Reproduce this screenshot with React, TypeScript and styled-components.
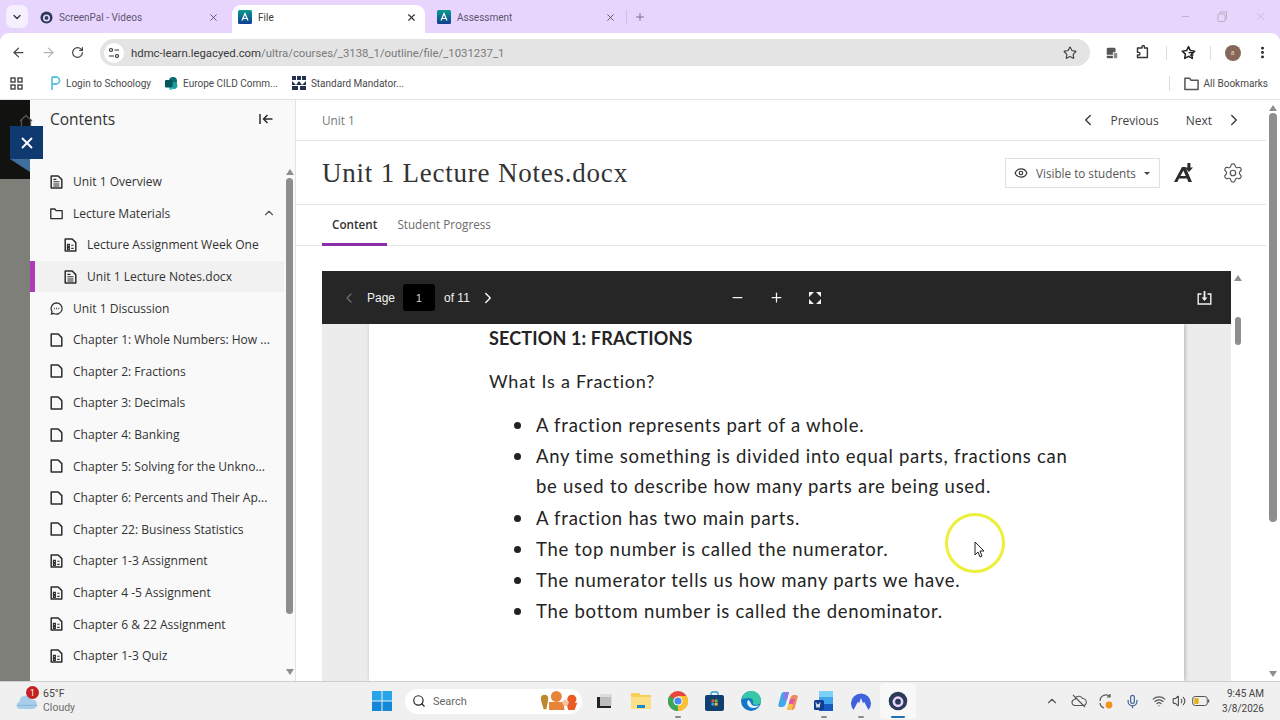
import React from "react";
import styled, { createGlobalStyle } from "styled-components";
import {
  ArrowLeft,
  ArrowRight,
  ChevronDown,
  ChevronLeft,
  ChevronRight,
  ChevronUp,
  Eye,
  Mic,
  Minus,
  MoreVertical,
  Plus,
  RotateCw,
  Search,
  Settings,
  Star,
  Volume2,
  Wifi,
  X,
} from "lucide-react";

const GlobalStyle = createGlobalStyle`
  html, body {
    margin: 0;
    padding: 0;
    overflow: hidden;
    background: #fff;
  }
  * {
    box-sizing: border-box;
  }
`;

const Screen = styled.div`
  position: relative;
  width: 1280px;
  height: 720px;
  display: flex;
  flex-direction: column;
  overflow: hidden;
  font-family: "Open Sans", sans-serif;
  color: #333;
`;

/* browser chrome */
const TabStrip = styled.div`
  height: 33px;
  flex: none;
  display: flex;
  align-items: flex-end;
  background: #e8d5fd;
  padding-left: 6px;
  font-family: "Roboto", sans-serif;
`;

const TabMenu = styled.div`
  width: 22px;
  height: 23px;
  margin: 0 4px 5px 0;
  border-radius: 7px;
  background: #f6effe;
  display: flex;
  align-items: center;
  justify-content: center;
  color: #333;
`;

const Tab = styled.div<{ $active?: boolean; $width: number; $left: number }>`
  width: ${(p) => p.$width}px;
  height: 28px;
  display: flex;
  align-items: center;
  padding: 0 ${(p) => (p.$active ? 8 : 13)}px 4px ${(p) => p.$left}px;
  border-radius: 9px 9px 0 0;
  background: ${(p) => (p.$active ? "#fff" : "transparent")};
  color: ${(p) => (p.$active ? "#3a3a3a" : "#5c5670")};
  font-size: 10px;
`;

const TabTitle = styled.span`
  flex: 1;
  margin-left: 6px;
`;

const TabDivider = styled.span`
  width: 1px;
  height: 14px;
  margin: 0 0 9px -3px;
  background: #cfc0e2;
`;

const NewTab = styled.div`
  display: flex;
  align-items: center;
  height: 28px;
  padding: 0 0 4px 7px;
  color: #7b7690;
`;

const WindowButtons = styled.div`
  margin-left: auto;
  height: 33px;
  display: flex;
  align-items: center;
  gap: 26px;
  padding-right: 13px;
  color: #b9b0c6;
`;

const ChromeBack = styled.div`
  flex: none;
  background: #e8d5fd;
`;

const Toolbar = styled.div`
  height: 33px;
  display: flex;
  align-items: center;
  background: #fff;
  border-radius: 9px 9px 0 0;
  padding: 6px 0 0 11px;
  color: #444;
`;

const NavButton = styled.span<{ $faint?: boolean }>`
  width: 30px;
  display: flex;
  color: ${(p) => (p.$faint ? "#b5b5b5" : "#444")};
`;

const UrlBar = styled.div`
  width: 990px;
  height: 27px;
  margin-left: -1px;
  display: flex;
  align-items: center;
  border-radius: 14px;
  background: #e4e4e4;
  padding: 0 13px 0 4px;
  font-family: "Roboto", sans-serif;
  font-size: 11.35px;
  color: #7a7a7a;
`;

const SiteBadge = styled.span`
  width: 20px;
  height: 20px;
  border-radius: 50%;
  background: #fff;
  display: flex;
  align-items: center;
  justify-content: center;
  margin-right: 7px;
`;

const UrlHost = styled.span`
  color: #3a3a3a;
`;

const UrlTail = styled.span`
  flex: 1;
`;

const ToolIcons = styled.div`
  flex: 1;
  display: flex;
  align-items: center;
  padding-left: 15px;
`;

const ToolSlot = styled.span<{ $width: number }>`
  width: ${(p) => p.$width}px;
  display: flex;
  align-items: center;
  justify-content: center;
`;

const ToolDivider = styled.span`
  width: 1px;
  height: 14px;
  background: #ddd;
`;

const Avatar = styled.span`
  width: 16px;
  height: 16px;
  border-radius: 50%;
  background: #86685a;
  color: #f0d8cc;
  font-size: 7px;
  display: flex;
  align-items: center;
  justify-content: center;
`;

const Bookmarks = styled.div`
  height: 34px;
  flex: none;
  display: flex;
  align-items: center;
  background: #fff;
  border-bottom: 1px solid #e2e2e2;
  padding: 1px 12px 0 10px;
  font-family: "Roboto", sans-serif;
  font-size: 10px;
  color: #4a4a4a;
`;

const Bookmark = styled.span<{ $left: number }>`
  display: flex;
  align-items: center;
  gap: 5px;
  margin-left: ${(p) => p.$left}px;
`;

const AllBookmarks = styled.span`
  display: flex;
  align-items: center;
  gap: 5px;
  margin-left: auto;
  padding-left: 14px;
  border-left: 1px solid #ddd;
`;

/* page */
const Page = styled.div`
  flex: 1;
  min-height: 0;
  display: flex;
  background: #fff;
`;

const Backdrop = styled.div`
  position: relative;
  width: 30px;
  flex: none;
  background: linear-gradient(#121210 0, #121210 79px, #7f7f7a 79px);
`;

const HomeGlyph = styled.span`
  position: absolute;
  left: 19px;
  top: 14px;
  display: flex;
  color: #555;
`;

const CloseFlag = styled.div`
  position: absolute;
  z-index: 2;
  left: 10px;
  top: 26px;
  width: 33px;
  height: 33px;
  background: #0e3a70;
  color: #fff;
  display: flex;
  align-items: center;
  justify-content: center;
`;

const FlagFold = styled.div`
  position: absolute;
  left: 10px;
  top: 59px;
  width: 20px;
  height: 13px;
  background: #3f6f9c;
  clip-path: polygon(0 0, 100% 0, 100% 100%);
`;

const Sidebar = styled.aside`
  width: 266px;
  flex: none;
  display: flex;
  flex-direction: column;
  background: #f9f9f9;
  border-right: 1px solid #e2e2e2;
`;

const SidebarHead = styled.div`
  height: 38px;
  flex: none;
  display: flex;
  align-items: center;
  justify-content: space-between;
  padding: 0 22px 0 20px;
  font-size: 15.5px;
  font-weight: 500;
  color: #333;
`;

const OutlineWrap = styled.div`
  flex: 1;
  min-height: 0;
  display: flex;
  overflow: hidden;
  padding-top: 28px;
`;

const Outline = styled.ul`
  list-style: none;
  margin: 0;
  padding: 0;
  width: 254px;
  flex: none;
`;

const OutlineRow = styled.li<{ $depth?: number; $selected?: boolean }>`
  height: 31.6px;
  display: flex;
  align-items: center;
  gap: 10px;
  padding-left: ${(p) => (p.$selected ? 29 : p.$depth ? 34 : 20)}px;
  padding-right: 8px;
  font-size: 12.05px;
  font-weight: 500;
  color: #333;
  white-space: nowrap;
  background: ${(p) => (p.$selected ? "#f1f1f1" : "transparent")};
  border-left: ${(p) => (p.$selected ? "5px solid #ad3bb8" : "0")};
`;

const RowLabel = styled.span`
  flex: 1;
`;

const Track = styled.div<{ $width: number }>`
  width: ${(p) => p.$width}px;
  flex: none;
  display: flex;
  flex-direction: column;
  align-items: center;
`;

const Thumb = styled.div<{ $top: number; $height: number; $width: number }>`
  width: ${(p) => p.$width}px;
  height: ${(p) => p.$height}px;
  margin-top: ${(p) => p.$top}px;
  border-radius: 4px;
  background: #8e8e8e;
`;

const Arrow = styled.span<{ $down?: boolean; $top: number }>`
  width: 0;
  height: 0;
  margin-top: ${(p) => p.$top}px;
  border-left: 4px solid transparent;
  border-right: 4px solid transparent;
  ${(p) =>
    p.$down
      ? "border-top: 6px solid #8e8e8e;"
      : "border-bottom: 6px solid #8e8e8e;"}
`;

const Main = styled.main`
  flex: 1;
  min-width: 0;
  display: flex;
`;

const MainColumn = styled.div`
  width: 970px;
  flex: none;
  display: flex;
  flex-direction: column;
`;

const Crumbs = styled.div`
  height: 41px;
  flex: none;
  display: flex;
  align-items: center;
  padding: 0 23px 0 26px;
  border-bottom: 1px solid #e4e4e4;
  font-size: 11.8px;
  color: #777;
`;

const Pager = styled.div`
  margin-left: auto;
  display: flex;
  align-items: center;
  font-size: 12px;
  font-weight: 500;
  color: #3f3f3f;
`;

const PagerLabel = styled.span<{ $left: number }>`
  display: flex;
  margin-left: ${(p) => p.$left}px;
`;

const TitleRow = styled.div`
  height: 64px;
  flex: none;
  display: flex;
  align-items: center;
  padding: 0 22px 0 26px;
  border-bottom: 1px solid #e4e4e4;
`;

const Title = styled.h1`
  margin: 2px auto 0 0;
  font-family: "Liberation Serif", serif;
  font-size: 27px;
  font-weight: 400;
  letter-spacing: 0.78px;
  color: #333;
`;

const VisibleMenu = styled.div`
  width: 155px;
  height: 30px;
  display: flex;
  align-items: center;
  gap: 8px;
  padding-left: 8px;
  border: 1px solid #e0e0e0;
  font-size: 11.7px;
  color: #555;
`;

const Caret = styled.span`
  width: 0;
  height: 0;
  margin-top: 2px;
  border-left: 3px solid transparent;
  border-right: 3px solid transparent;
  border-top: 3px solid #444;
`;

const TitleIcon = styled.span<{ $left: number }>`
  display: flex;
  margin-left: ${(p) => p.$left}px;
  color: #555;
`;

const TabsRow = styled.div`
  height: 41px;
  flex: none;
  display: flex;
  padding-left: 26px;
  border-bottom: 1px solid #e4e4e4;
`;

const ContentTab = styled.div<{ $active?: boolean }>`
  display: flex;
  align-items: center;
  padding: 0 10px;
  margin-bottom: -1px;
  font-size: 11.7px;
  font-weight: ${(p) => (p.$active ? 600 : 500)};
  color: ${(p) => (p.$active ? "#333" : "#6a6a6a")};
  border-bottom: 3px solid ${(p) => (p.$active ? "#8c2fa6" : "transparent")};
`;

const ViewerArea = styled.div`
  flex: 1;
  min-height: 0;
  display: flex;
  padding: 25px 0 0 26px;
`;

const Viewer = styled.div`
  width: 909px;
  flex: none;
  display: flex;
  flex-direction: column;
`;

const ViewerBar = styled.div`
  height: 53px;
  flex: none;
  display: flex;
  align-items: center;
  background: #262626;
  color: #f2f2f2;
  font-family: "Liberation Sans", sans-serif;
  font-size: 12px;
  padding: 0 19px;
`;

const PageInput = styled.span`
  width: 32px;
  height: 27px;
  margin: 0 9px 0 8px;
  border-radius: 3px;
  background: #000;
  color: #ddd;
  display: flex;
  align-items: center;
  justify-content: center;
  font-size: 10.5px;
`;

const BarGroup = styled.span<{ $left: number; $gap?: number }>`
  display: flex;
  align-items: center;
  gap: ${(p) => p.$gap ?? 0}px;
  margin-left: ${(p) => p.$left}px;
`;

const BarEnd = styled.span`
  display: flex;
  margin-left: auto;
`;

const DocBackground = styled.div`
  flex: 1;
  min-height: 0;
  display: flex;
  justify-content: center;
  background: #ececec;
  overflow: hidden;
`;

const DocSheet = styled.div`
  width: 815px;
  height: 100%;
  flex: none;
  background: #fff;
  box-shadow: 1px 0 4px rgba(0, 0, 0, 0.25);
  padding: 0 120px;
  font-family: "Lato", sans-serif;
  font-size: 18.5px;
  letter-spacing: 0.73px;
  color: #242424;
`;

const DocHeading = styled.h2`
  margin: 0;
  padding-top: 2px;
  height: 29px;
  line-height: 24px;
  font-size: 18px;
  font-weight: 700;
  letter-spacing: 0.15px;
`;

const DocSub = styled.p`
  margin: 0;
  padding-top: 13px;
  height: 44px;
  line-height: 30px;
  font-size: 18px;
  letter-spacing: 0.78px;
`;

const DocList = styled.ul`
  list-style: none;
  margin: 13px 0 0;
  padding: 0 0 0 47px;
  width: 592px;
`;

const DocItem = styled.li`
  position: relative;
  line-height: 30px;
  margin-bottom: 1.3px;
  &::before {
    content: "";
    position: absolute;
    left: -22px;
    top: 12px;
    width: 7px;
    height: 7px;
    border-radius: 50%;
    background: #222;
  }
`;

const OuterTrack = styled(Track)`
  padding-top: 5px;
`;

const Highlight = styled.div`
  position: absolute;
  left: 945px;
  top: 513px;
  width: 60px;
  height: 60px;
  border-radius: 50%;
  border: 3px solid #ecf03a;
`;

const PointerMark = styled.svg`
  position: absolute;
  left: 974px;
  top: 541px;
`;

/* taskbar */
const Taskbar = styled.div`
  height: 39px;
  flex: none;
  display: flex;
  align-items: center;
  background: #f0f0f0;
  border-top: 1px solid #cfcfcf;
  font-family: "Roboto", sans-serif;
  color: #444;
`;

const Weather = styled.div`
  position: relative;
  width: 372px;
  flex: none;
  height: 100%;
  display: flex;
  align-items: center;
  padding-left: 16px;
`;

const Badge = styled.span`
  position: absolute;
  left: 26px;
  top: 4px;
  width: 13px;
  height: 13px;
  border-radius: 50%;
  background: #c4201f;
  color: #fff;
  font-size: 8.5px;
  display: flex;
  align-items: center;
  justify-content: center;
`;

const WeatherText = styled.div`
  margin-left: 5px;
  font-size: 10.5px;
  line-height: 14px;
`;

const WeatherSub = styled.div`
  color: #6c6c6c;
`;

const SearchPill = styled.div`
  width: 177px;
  height: 25px;
  margin-left: 13px;
  border-radius: 13px;
  background: #fff;
  display: flex;
  align-items: center;
  padding-left: 7px;
  gap: 7px;
  font-size: 11px;
  color: #666;
`;

const PillArt = styled.svg`
  margin-left: 66px;
`;

const TaskSlot = styled.div<{ $running?: boolean; $current?: boolean }>`
  position: relative;
  width: 36.7px;
  height: 36px;
  display: flex;
  align-items: center;
  justify-content: center;
  border-radius: 4px;
  background: ${(p) => (p.$current ? "#f8f8f8" : "transparent")};
  &::after {
    content: "";
    display: ${(p) => (p.$running || p.$current ? "block" : "none")};
    position: absolute;
    bottom: 1px;
    left: 50%;
    width: ${(p) => (p.$current ? 14 : 6)}px;
    height: 2px;
    margin-left: ${(p) => (p.$current ? -7 : -3)}px;
    border-radius: 1px;
    background: ${(p) => (p.$current ? "#1f6fb2" : "#8a8a8a")};
  }
`;

const TaskIcons = styled.div`
  display: flex;
  align-items: center;
  margin-left: 4px;
`;

const Tray = styled.div`
  margin-left: auto;
  display: flex;
  align-items: center;
  color: #555;
  padding-right: 16px;
`;

const TraySlot = styled.span<{ $width: number }>`
  width: ${(p) => p.$width}px;
  display: flex;
  justify-content: center;
`;

const Clock = styled.div`
  width: 45px;
  margin-left: 3px;
  text-align: right;
  font-size: 10px;
  line-height: 15px;
  color: #444;
`;

const ViewerChevron = styled.span<{ $faint?: boolean; $left: number }>`
  display: flex;
  margin-left: ${(p) => p.$left}px;
  color: ${(p) => (p.$faint ? "#6a6a6a" : "#f4f4f4")};
`;

/* drawings */
const Anthology = () => (
  <svg width="14" height="14" viewBox="0 0 14 14">
    <defs>
      <linearGradient id="lg" x1="0" y1="0" x2="0" y2="1">
        <stop offset="0" stopColor="#0f9a8e" />
        <stop offset="1" stopColor="#0d3f93" />
      </linearGradient>
    </defs>
    <rect width="14" height="14" rx="1.5" fill="url(#lg)" />
    <path d="M4 10.5 7 3.5l3 7M5.2 8.5h3.6" fill="none" stroke="#fff" strokeWidth="1.2" />
  </svg>
);

const ScreenPal = ({ size = 13 }: { size?: number }) => (
  <svg width={size} height={size} viewBox="0 0 14 14">
    <circle cx="7" cy="7" r="6.5" fill="#2b3a56" />
    <circle cx="7" cy="7.5" r="3.8" fill="#e8d5fd" />
    <circle cx="7" cy="7.5" r="2" fill="#2b3a56" />
  </svg>
);

const PageIcon = ({ kind }: { kind: "blank" | "doc" | "sheet" }) => (
  <svg width="13" height="14" viewBox="0 0 13 14" fill="none" stroke="#2d2d2d" strokeWidth="1.5">
    <path d="M1.2 1h7l3.6 3.6V13H1.2z" strokeLinejoin="round" />
    {kind === "doc" && <path d="M3.4 6.8h6M3.4 9h6M3.4 11h6M3.4 4.4h3" strokeWidth="1.1" />}
    {kind === "sheet" && (
      <path d="M3.4 6.4h2v2h-2zM3.4 9.6h2v1.8h-2zM7.2 7.2h2.4M7.2 10.4h2.4" strokeWidth="1.1" />
    )}
  </svg>
);

const FolderIcon = ({ color = "#2d2d2d", size = 13 }: { color?: string; size?: number }) => (
  <svg width={size} height={size} viewBox="0 0 13 13" fill="none" stroke={color} strokeWidth="1.3">
    <path d="M.8 2h4l1.3 1.6h6.1v8H.8z" strokeLinejoin="round" />
  </svg>
);

const ChatIcon = () => (
  <svg width="13" height="13" viewBox="0 0 14 14" fill="none" stroke="#2d2d2d" strokeWidth="1.3">
    <path d="M7 1a6 6 0 1 1-2.8 11.3L1.4 13l.8-2.7A6 6 0 0 1 7 1z" strokeLinejoin="round" />
    <path d="M4.2 7h.9M6.6 7h.9M9 7h.9" strokeWidth="1.4" />
  </svg>
);

const CollapseIcon = () => (
  <svg width="14" height="12" viewBox="0 0 14 12" fill="none" stroke="#2b2b2b" strokeWidth="1.5">
    <path d="M1 1v10M13.5 6H4.5M8.5 2 4.5 6l4 4" />
  </svg>
);

const AppsIcon = () => (
  <svg width="13" height="13" viewBox="0 0 13 13" fill="none" stroke="#444" strokeWidth="1.4">
    <rect x="1" y="1" width="4" height="4" />
    <rect x="8" y="1" width="4" height="4" />
    <rect x="1" y="8" width="4" height="4" />
    <rect x="8" y="8" width="4" height="4" />
  </svg>
);

const TuneIcon = () => (
  <svg width="12" height="12" viewBox="0 0 12 12" fill="none" stroke="#333" strokeWidth="1.2">
    <circle cx="3" cy="3" r="1.5" />
    <circle cx="9" cy="9" r="1.5" />
    <path d="M6.5 3H11M1 9h5" />
  </svg>
);

const SaveIcon = () => (
  <svg width="14" height="14" viewBox="0 0 16 16" fill="#555">
    <path d="M2 3.5A1.5 1.5 0 0 1 3.5 2h7A1.5 1.5 0 0 1 12 3.5V7H9v3H2zM2 11h7v3H3.5A1.5 1.5 0 0 1 2 12.5z" />
    <path d="M10 8h4v6h-4z" fill="#8d8d8d" />
  </svg>
);

const PuzzleIcon = () => (
  <svg width="15" height="15" viewBox="0 0 15 15" fill="none" stroke="#333" strokeWidth="1.4">
    <path d="M5 3h2V1.8a1.2 1.2 0 0 1 2.4 0V3h3v9.5H2.5V10h1.2a1.3 1.3 0 0 0 0-2.6H2.5V3z" strokeLinejoin="round" />
  </svg>
);

const StarList = () => (
  <svg width="15" height="15" viewBox="0 0 24 24" fill="none" stroke="#222" strokeWidth="2.4">
    <path d="M12 2.5l3 6.4 7 .9-5.1 4.8 1.3 6.9-6.2-3.4-6.2 3.4 1.3-6.9L2 9.8l7-.9z" strokeLinejoin="round" />
    <path d="M12 12h8M14 16h6" strokeWidth="2" />
  </svg>
);

const SchoologyMark = () => (
  <svg width="11" height="15" viewBox="0 0 11 15" fill="none" stroke="#63c3de" strokeWidth="1.8">
    <path d="M2 1v13M2 1h4a3.2 3.2 0 0 1 0 7H2" />
  </svg>
);

const SharePointMark = () => (
  <svg width="13" height="13" viewBox="0 0 13 13">
    <circle cx="8" cy="4" r="4" fill="#0b6a6e" />
    <circle cx="9" cy="8.5" r="3.4" fill="#1a9ba1" />
    <circle cx="6" cy="11" r="2" fill="#37c6d0" />
    <rect x="0" y="3" width="7.5" height="7.5" rx="1" fill="#06575b" />
  </svg>
);

const MatrixMark = () => (
  <svg width="14" height="14" viewBox="0 0 14 14" fill="#23304f">
    <path d="M0 0h4v4H0zM5 0h4v4H5zM10 0h4v4h-4zM0 5l4 4H0zM14 5l-4 4h4zM7 5l3 4H4z" />
    <path d="M0 10h6v4H0zM8 10h6v4H8z" />
  </svg>
);

const FullScreen = () => (
  <svg width="14" height="14" viewBox="0 0 14 14" fill="#f2f2f2">
    <path d="M1 1h5L1 6zM13 1H8l5 5zM1 13h5l-5-5zM13 13H8l5-5z" />
  </svg>
);

const DownloadIcon = () => (
  <svg width="15" height="14" viewBox="0 0 15 14" fill="none" stroke="#f2f2f2" strokeWidth="1.4">
    <path d="M4.5 3H1.2v10h12.6V3h-3.3" />
    <path d="M7.5 0v8" strokeWidth="1.8" />
    <path d="M4.6 6.5h5.8L7.5 10z" fill="#f2f2f2" stroke="none" />
  </svg>
);

const AnthologyTool = () => (
  <svg width="22" height="22" viewBox="0 0 22 22" fill="#2b2b2b">
    <path d="M1 20 9 5h3.4l6.6 15h-3.6l-1.4-3.4H6L4.4 20zM7.4 14h5.4L10.4 8.4z" />
    <path d="M14.4 1h3v4.4h2.6L15.9 10l-4-4.6h2.5z" />
  </svg>
);

const WinLogo = () => (
  <svg width="20" height="20" viewBox="0 0 20 20">
    <path d="M0 0h9.5v9.5H0zM10.5 0H20v9.5h-9.5z" fill="#27a5e8" />
    <path d="M0 10.5h9.5V20H0zM10.5 10.5H20V20h-9.5z" fill="#1488d8" />
  </svg>
);

const PeopleArt = () => (
  <PillArt width="40" height="20" viewBox="0 0 44 22">
    <circle cx="5" cy="8" r="4" fill="#b98a2e" />
    <path d="M1 10h8l-2 10H4z" fill="#b98a2e" />
    <circle cx="18" cy="6" r="6" fill="#e8833a" />
    <path d="M10 12h16l1 9H10z" fill="#e8833a" />
    <circle cx="35" cy="9" r="5" fill="#ea5a22" />
    <path d="M29 13h12l-3 8h-7z" fill="#ea5a22" />
    <circle cx="28" cy="13" r="3.4" fill="#f6c3a8" />
  </PillArt>
);

const TaskView = () => (
  <svg width="16" height="16" viewBox="0 0 16 16">
    <rect x="4" y="1" width="12" height="11" fill="#dcdcdc" />
    <path d="M1 4h3v9h11v2H1z" fill="#222" />
    <rect x="4" y="4" width="11" height="9" fill="#bdbdbd" />
  </svg>
);

const Explorer = () => (
  <svg width="20" height="18" viewBox="0 0 20 18">
    <path d="M0 1h8l2 2h10v14H0z" fill="#f6cf5a" />
    <rect x="0" y="5" width="20" height="12" fill="#fbe087" />
    <rect x="6" y="13" width="8" height="3" fill="#1a8ad4" />
  </svg>
);

const ChromeLogo = () => (
  <svg width="20" height="20" viewBox="0 0 20 20">
    <circle cx="10" cy="10" r="10" fill="#e8453c" />
    <path d="M10 10 1.3 5A10 10 0 0 0 10 20l5-8.6z" fill="#3aa757" />
    <path d="M10 10 10 20A10 10 0 0 0 18.7 5H10z" fill="#fbc02d" />
    <circle cx="10" cy="10" r="4.6" fill="#fff" />
    <circle cx="10" cy="10" r="3.6" fill="#4a8af4" />
  </svg>
);

const StoreLogo = () => (
  <svg width="19" height="20" viewBox="0 0 19 20">
    <path d="M6 4V2.5A1.5 1.5 0 0 1 7.5 1h4A1.5 1.5 0 0 1 13 2.5V4" fill="none" stroke="#2a9fd8" strokeWidth="1.3" />
    <rect x="0" y="4" width="19" height="16" rx="2" fill="#11406e" />
    <path d="M6.5 8.5h2.8v2.8H6.5z" fill="#e8563a" />
    <path d="M9.8 8.5h2.8v2.8H9.8z" fill="#7fba3a" />
    <path d="M6.5 11.8h2.8v2.8H6.5z" fill="#2fa4e8" />
    <path d="M9.8 11.8h2.8v2.8H9.8z" fill="#f6b93b" />
  </svg>
);

const EdgeLogo = () => (
  <svg width="20" height="20" viewBox="0 0 20 20">
    <circle cx="10" cy="10" r="10" fill="#1476c6" />
    <path d="M.6 8C2 2.5 7 0 10 0c5.5 0 10 4 10 9.5 0 3-2.5 4.5-5 4.5-2 0-3.5-1-3-2.5.8-2-1-4.5-4-4.5-3 0-6.5 1-7.4 1z" fill="#36c7a6" />
    <path d="M7 9c-2 3 0 8 5.5 8 2.5 0 4.5-1 6-3-1.5 1-7 2-8.5-1.5C9 10.5 8 9 7 9z" fill="#e6f4ff" />
  </svg>
);

const CopilotLogo = () => (
  <svg width="20" height="20" viewBox="0 0 20 20">
    <path d="M6 1h5L8 12c-.6 2.5-2 4-4 4H2C.6 16 0 15 .4 13.5L3 4c.4-2 1.5-3 3-3z" fill="#3fa9e8" />
    <path d="M6 1h5l-2 8H5z" fill="#8a7be8" />
    <path d="M14 19H9l3-11c.6-2.5 2-4 4-4h2c1.4 0 2 1 1.6 2.5L17 16c-.4 2-1.5 3-3 3z" fill="#f08a5c" />
    <path d="M14 19H9l1.5-6H15z" fill="#f2c14e" />
    <path d="M12 8h5l-2 5h-4z" fill="#e056a8" />
  </svg>
);

const WordLogo = () => (
  <svg width="20" height="20" viewBox="0 0 20 20">
    <rect x="5" y="0" width="14" height="20" rx="1" fill="#41a5ee" />
    <rect x="5" y="0" width="14" height="6" fill="#7fd0f6" />
    <rect x="5" y="13" width="14" height="7" fill="#185abd" />
    <rect x="0" y="9" width="10" height="10" rx="1.5" fill="#103f91" />
    <path d="M2 11.5l1 5 1-3.5 1 3.5 1-5" fill="none" stroke="#fff" strokeWidth=".9" />
  </svg>
);

const NordLogo = () => (
  <svg width="20" height="20" viewBox="0 0 20 20">
    <path d="M2.5 19A10 10 0 1 1 17.5 19L13 10.5l-1 2L10 7l-2 5.5-1-2z" fill="#3e62dd" />
  </svg>
);

const TrayCloud = () => (
  <svg width="16" height="16" viewBox="0 0 16 16" fill="none" stroke="#555" strokeWidth="1.1">
    <path d="M4 12.5a3 3 0 0 1 0-6 4 4 0 0 1 7.5-1 3.5 3.5 0 0 1 .5 7z" />
    <path d="M2 2l12 12" />
  </svg>
);

const TraySync = () => (
  <svg width="16" height="17" viewBox="0 0 16 17" fill="none" stroke="#555" strokeWidth="1.2">
    <path d="M2 8a6 6 0 0 1 10-4.5M12 1v3H9M2 10a6 6 0 0 0 4 5" />
    <circle cx="11" cy="12" r="3.4" fill="#f0941f" stroke="none" />
  </svg>
);

const BatteryIcon = () => (
  <svg width="18" height="12" viewBox="0 0 18 12" fill="none">
    <rect x=".7" y="1.5" width="14.6" height="9" rx="2.5" stroke="#555" strokeWidth="1" />
    <rect x="2.2" y="3" width="4.5" height="6" rx="1" fill="#e4b21d" />
    <path d="M16.6 4.5v3" stroke="#555" strokeWidth="1.2" />
  </svg>
);

const CloudIcon = () => (
  <svg width="22" height="17" viewBox="0 0 26 20">
    <path d="M5 19a4.5 4.5 0 0 1-1-8.8A7.5 7.5 0 0 1 18.5 8 5.5 5.5 0 0 1 20 19z" fill="#a7cdea" />
    <path d="M1 14h24v1H1z" fill="#7fb0d6" />
  </svg>
);

const HomeIcon = () => (
  <svg width="14" height="14" viewBox="0 0 14 14" fill="none" stroke="currentColor" strokeWidth="1.3">
    <path d="M1 7 7 1.5 13 7M2.5 6v7h9V6" />
  </svg>
);

const outline: { label: string; kind: string; depth?: number; selected?: boolean; open?: boolean }[] = [
  { label: "Unit 1 Overview", kind: "doc" },
  { label: "Lecture Materials", kind: "folder", open: true },
  { label: "Lecture Assignment Week One", kind: "sheet", depth: 1 },
  { label: "Unit 1 Lecture Notes.docx", kind: "doc", depth: 1, selected: true },
  { label: "Unit 1 Discussion", kind: "chat" },
  { label: "Chapter 1: Whole Numbers: How ...", kind: "blank" },
  { label: "Chapter 2: Fractions", kind: "blank" },
  { label: "Chapter 3: Decimals", kind: "blank" },
  { label: "Chapter 4: Banking", kind: "blank" },
  { label: "Chapter 5: Solving for the Unkno...", kind: "blank" },
  { label: "Chapter 6: Percents and Their Ap...", kind: "blank" },
  { label: "Chapter 22: Business Statistics", kind: "blank" },
  { label: "Chapter 1-3 Assignment", kind: "sheet" },
  { label: "Chapter 4 -5 Assignment", kind: "sheet" },
  { label: "Chapter 6 & 22 Assignment", kind: "sheet" },
  { label: "Chapter 1-3 Quiz", kind: "sheet" },
];

const bullets = [
  "A fraction represents part of a whole.",
  "Any time something is divided into equal parts, fractions can be used to describe how many parts are being used.",
  "A fraction has two main parts.",
  "The top number is called the numerator.",
  "The numerator tells us how many parts we have.",
  "The bottom number is called the denominator.",
];

const rowIcon = (kind: string) => {
  if (kind === "folder") return <FolderIcon />;
  if (kind === "chat") return <ChatIcon />;
  return <PageIcon kind={kind as "blank" | "doc" | "sheet"} />;
};

const App: React.FC = () => {
  return (
    <Screen>
      <GlobalStyle />
      <TabStrip>
        <TabMenu>
          <ChevronDown size={12} strokeWidth={2.5} />
        </TabMenu>
        <Tab $width={200} $left={8}>
          <ScreenPal />
          <TabTitle>ScreenPal - Videos</TabTitle>
          <X size={11} strokeWidth={2} color="#555" />
        </Tab>
        <Tab $active $width={193} $left={6}>
          <Anthology />
          <TabTitle>File</TabTitle>
          <X size={11} strokeWidth={2.5} color="#333" />
        </Tab>
        <Tab $width={204} $left={12}>
          <Anthology />
          <TabTitle>Assessment</TabTitle>
          <X size={11} strokeWidth={2} color="#555" />
        </Tab>
        <TabDivider />
        <NewTab>
          <Plus size={12} />
        </NewTab>
        <WindowButtons>
          <Minus size={11} />
          <svg width="11" height="11" viewBox="0 0 11 11" fill="none" stroke="currentColor">
            <rect x="1" y="3" width="7" height="7.5" rx="1" />
            <path d="M3 3V1h6.5v7H8" />
          </svg>
          <X size={13} strokeWidth={1.2} />
        </WindowButtons>
      </TabStrip>

      <ChromeBack>
        <Toolbar>
          <NavButton>
            <ArrowLeft size={15} />
          </NavButton>
          <NavButton $faint>
            <ArrowRight size={15} />
          </NavButton>
          <NavButton>
            <RotateCw size={13} strokeWidth={2.2} />
          </NavButton>
          <UrlBar>
            <SiteBadge>
              <TuneIcon />
            </SiteBadge>
            <UrlHost>hdmc-learn.legacyed.com</UrlHost>
            <UrlTail>/ultra/courses/_3138_1/outline/file/_1031237_1</UrlTail>
            <Star size={14} color="#444" />
          </UrlBar>
          <ToolIcons>
            <ToolSlot $width={14}>
              <SaveIcon />
            </ToolSlot>
            <ToolSlot $width={47}>
              <PuzzleIcon />
            </ToolSlot>
            <ToolDivider />
            <ToolSlot $width={43}>
              <StarList />
            </ToolSlot>
            <ToolDivider />
            <ToolSlot $width={43}>
              <Avatar>a</Avatar>
            </ToolSlot>
            <ToolSlot $width={16}>
              <MoreVertical size={15} strokeWidth={2.6} color="#222" />
            </ToolSlot>
          </ToolIcons>
        </Toolbar>
      </ChromeBack>

      <Bookmarks>
        <AppsIcon />
        <Bookmark $left={27}>
          <SchoologyMark />
          Login to Schoology
        </Bookmark>
        <Bookmark $left={14}>
          <SharePointMark />
          Europe CILD Comm...
        </Bookmark>
        <Bookmark $left={14}>
          <MatrixMark />
          Standard Mandator...
        </Bookmark>
        <AllBookmarks>
          <FolderIcon color="#555" size={15} />
          All Bookmarks
        </AllBookmarks>
      </Bookmarks>

      <Page>
        <Backdrop>
          <HomeGlyph>
            <HomeIcon />
          </HomeGlyph>
          <CloseFlag>
            <X size={18} strokeWidth={2.4} />
          </CloseFlag>
          <FlagFold />
        </Backdrop>

        <Sidebar>
          <SidebarHead>
            Contents
            <CollapseIcon />
          </SidebarHead>
          <OutlineWrap>
            <Outline>
              {outline.map((row) => (
                <OutlineRow key={row.label} $depth={row.depth} $selected={row.selected}>
                  {rowIcon(row.kind)}
                  <RowLabel>{row.label}</RowLabel>
                  {row.open && <ChevronUp size={14} color="#555" />}
                </OutlineRow>
              ))}
            </Outline>
            <Track $width={11}>
              <Arrow $top={3} />
              <Thumb $top={3} $width={7} $height={436} />
              <Arrow $down $top={55} />
            </Track>
          </OutlineWrap>
        </Sidebar>

        <Main>
          <MainColumn>
            <Crumbs>
              Unit 1
              <Pager>
                <ChevronLeft size={18} />
                <PagerLabel $left={13}>Previous</PagerLabel>
                <PagerLabel $left={27}>Next</PagerLabel>
                <PagerLabel $left={13}>
                  <ChevronRight size={18} />
                </PagerLabel>
              </Pager>
            </Crumbs>

            <TitleRow>
              <Title>Unit 1 Lecture Notes.docx</Title>
              <VisibleMenu>
                <Eye size={14} color="#333" />
                Visible to students
                <Caret />
              </VisibleMenu>
              <TitleIcon $left={13}>
                <AnthologyTool />
              </TitleIcon>
              <TitleIcon $left={27}>
                <Settings size={22} strokeWidth={1.3} />
              </TitleIcon>
            </TitleRow>

            <TabsRow>
              <ContentTab $active>Content</ContentTab>
              <ContentTab>Student Progress</ContentTab>
            </TabsRow>

            <ViewerArea>
              <Viewer>
                <ViewerBar>
                  <ViewerChevron $faint $left={0}>
                    <ChevronLeft size={16} />
                  </ViewerChevron>
                  <BarGroup $left={10}>Page</BarGroup>
                  <PageInput>1</PageInput>
                  of 11
                  <ViewerChevron $left={9}>
                    <ChevronRight size={18} />
                  </ViewerChevron>
                  <BarGroup $left={233} $gap={24}>
                    <Minus size={15} />
                    <Plus size={15} />
                    <FullScreen />
                  </BarGroup>
                  <BarEnd>
                    <DownloadIcon />
                  </BarEnd>
                </ViewerBar>
                <DocBackground>
                  <DocSheet>
                    <DocHeading>SECTION 1: FRACTIONS</DocHeading>
                    <DocSub>What Is a Fraction?</DocSub>
                    <DocList>
                      {bullets.map((b) => (
                        <DocItem key={b}>{b}</DocItem>
                      ))}
                    </DocList>
                  </DocSheet>
                </DocBackground>
              </Viewer>
              <Track $width={14}>
                <Arrow $top={4} />
                <Thumb $top={36} $width={6} $height={28} />
              </Track>
            </ViewerArea>
          </MainColumn>

          <OuterTrack $width={14}>
            <Arrow $top={0} />
            <Thumb $top={2} $width={8} $height={409} />
            <Arrow $down $top={149} />
          </OuterTrack>
        </Main>
      </Page>

      <Taskbar>
        <Weather>
          <CloudIcon />
          <Badge>1</Badge>
          <WeatherText>
            65°F
            <WeatherSub>Cloudy</WeatherSub>
          </WeatherText>
        </Weather>
        <WinLogo />
        <SearchPill>
          <Search size={14} color="#222" />
          Search
          <PeopleArt />
        </SearchPill>
        <TaskIcons>
          <TaskSlot>
            <TaskView />
          </TaskSlot>
          <TaskSlot>
            <Explorer />
          </TaskSlot>
          <TaskSlot $running>
            <ChromeLogo />
          </TaskSlot>
          <TaskSlot>
            <StoreLogo />
          </TaskSlot>
          <TaskSlot>
            <EdgeLogo />
          </TaskSlot>
          <TaskSlot>
            <CopilotLogo />
          </TaskSlot>
          <TaskSlot $running>
            <WordLogo />
          </TaskSlot>
          <TaskSlot $running>
            <NordLogo />
          </TaskSlot>
          <TaskSlot $current>
            <ScreenPal size={20} />
          </TaskSlot>
        </TaskIcons>
        <Tray>
          <TraySlot $width={27}>
            <ChevronUp size={14} />
          </TraySlot>
          <TraySlot $width={27}>
            <TrayCloud />
          </TraySlot>
          <TraySlot $width={27}>
            <TraySync />
          </TraySlot>
          <TraySlot $width={26}>
            <Mic size={15} color="#4a6a9a" />
          </TraySlot>
          <TraySlot $width={27}>
            <Wifi size={14} />
          </TraySlot>
          <TraySlot $width={14}>
            <Volume2 size={14} />
          </TraySlot>
          <TraySlot $width={30}>
            <BatteryIcon />
          </TraySlot>
          <Clock>
            9:45 AM
            <br />
            3/8/2026
          </Clock>
        </Tray>
      </Taskbar>

      <Highlight />
      <PointerMark width="12" height="18" viewBox="0 0 12 18">
        <path d="M1 1v13l3-3 2 5 2-1-2-5h4z" fill="#fff" stroke="#222" strokeWidth="1" />
      </PointerMark>
    </Screen>
  );
};

export default App;
